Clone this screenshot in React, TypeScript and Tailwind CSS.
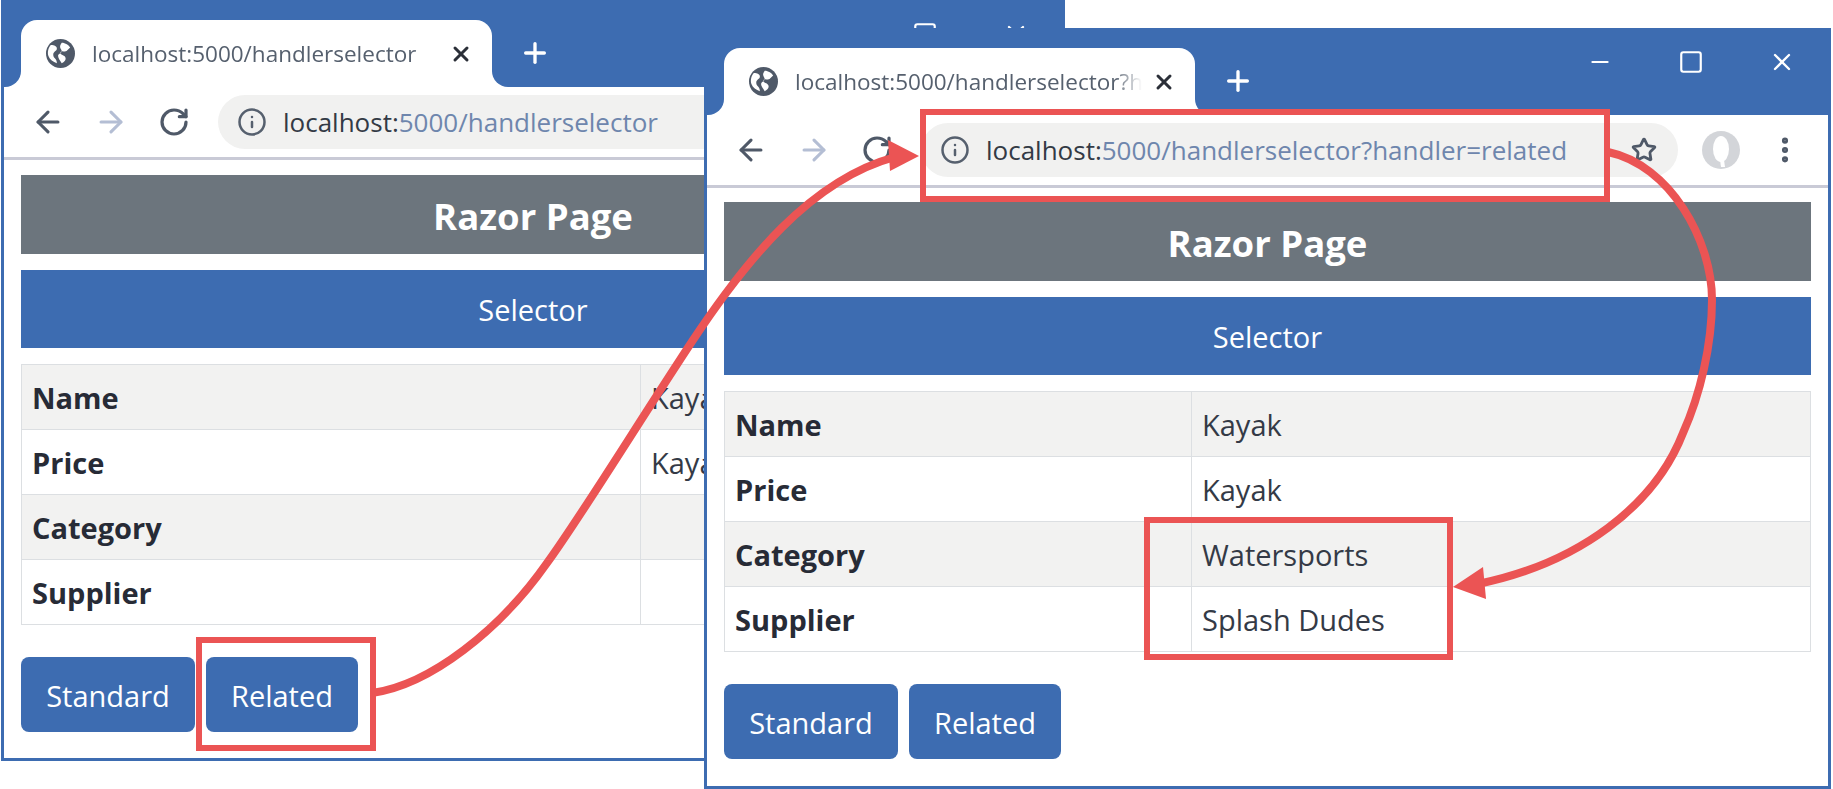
import { ArrowLeft, ArrowRight, Info, MoreVertical, Plus, RotateCw, Square, Star, X, Minus } from 'lucide-react'

type Row = { label: string; value: string }

type BrowserProps = {
  className: string
  pageTop: string
  tab: string
  url: string
  labelCol: string
  rows: Row[]
}

function Globe() {
  return (
    <svg viewBox="0 0 24 24" className="w-[29px] h-[29px] shrink-0">
      <circle cx="12" cy="12" r="12" fill="#4f5968" />
      <path d="M4 5c3 0 5 1 5 3s-3 2-3 5 3 3 3 7c-3-1-6-3-7-6-1-3 0-7 2-9z" fill="#fff" />
      <path d="M13 3c3 0 6 2 7 4l-3 3c-2 1-4-1-5 1s3 2 4 4-1 4-3 5c-1-2-3-4-3-6s3-2 3-4-3-3 0-7z" fill="#fff" />
    </svg>
  )
}

function Avatar() {
  return (
    <svg viewBox="0 0 40 40" className="w-[40px] h-[40px]">
      <circle cx="20" cy="20" r="19" fill="#d3d5d9" />
      <ellipse cx="20" cy="19" rx="8" ry="13" fill="#fff" />
      <path d="M19 30h4l1 7h-4z" fill="#fff" />
    </svg>
  )
}

function BrowserWindow({ className, pageTop, tab, url, labelCol, rows }: BrowserProps) {
  const host = url.slice(0, 10)
  const rest = url.slice(10)
  return (
    <div className={`absolute border-[3px] border-[#3d6cb1] bg-white overflow-hidden flex flex-col ${className}`}>
      {/* title bar */}
      <div className="h-[84px] shrink-0 bg-[#3d6cb1] flex items-end pl-[17px]">
        <div className="relative w-[471px] h-[67px] bg-white rounded-t-[16px] flex items-center pl-[25px] pr-[19px]">
          <span className="absolute -left-4 bottom-0 w-4 h-4 bg-white">
            <span className="block w-full h-full bg-[#3d6cb1] rounded-br-[16px]" />
          </span>
          <span className="absolute -right-4 bottom-0 w-4 h-4 bg-white">
            <span className="block w-full h-full bg-[#3d6cb1] rounded-bl-[16px]" />
          </span>
          <Globe />
          <span className="ml-[17px] flex-1 min-w-0 whitespace-nowrap text-[22.5px] text-[#56606e] [mask-image:linear-gradient(to_right,black_calc(100%_-_30px),transparent_calc(100%_-_2px))]">{tab}</span>
          <X className="w-6 h-6 ml-2 shrink-0 text-[#2b2f38]" strokeWidth={3} />
        </div>
        <Plus className="w-[32px] h-[32px] ml-[27px] mb-[18px] text-white" strokeWidth={2.5} />
        <div className="ml-auto self-start flex items-center h-[62px] text-white">
          <Minus className="w-[26px] h-[26px]" strokeWidth={2} />
          <Square className="w-[26px] h-[26px] ml-[65px]" strokeWidth={2} />
          <X className="w-[28px] h-[28px] ml-[64px] mr-[32px]" strokeWidth={2} />
        </div>
      </div>

      {/* toolbar */}
      <div className="h-[73px] shrink-0 border-b-[3px] border-[#c9cad6] flex items-center pl-3">
        <div className="w-[63px] flex justify-center">
          <ArrowLeft className="w-[34px] h-[34px] text-[#4f5968]" strokeWidth={2.2} />
        </div>
        <div className="w-[63px] flex justify-center">
          <ArrowRight className="w-[34px] h-[34px] text-[#b4bed4]" strokeWidth={2.2} />
        </div>
        <div className="w-[63px] flex justify-center">
          <RotateCw className="w-[32px] h-[32px] text-[#4f5968]" strokeWidth={2.4} />
        </div>
        <div className="ml-[13px] flex-1 min-w-0 h-[54px] rounded-full bg-[#f1f1f0] flex items-center pl-[19px] pr-[21px]">
          <Info className="w-[30px] h-[30px] shrink-0 text-[#56606e]" strokeWidth={2} />
          <span className="ml-[16px] flex-1 whitespace-nowrap text-[26px] text-[#6e86ad]">
            <span className="text-[#333a45]">{host}</span>
            {rest}
          </span>
          <Star className="w-[26px] h-[26px] shrink-0 text-[#4f5968]" strokeWidth={2.6} />
        </div>
        <div className="ml-[11px] w-[64px] flex justify-center">
          <Avatar />
        </div>
        <div className="w-[64px] mr-[11px] flex justify-center">
          <MoreVertical className="w-[32px] h-[32px] text-[#4f5968]" strokeWidth={2.6} />
        </div>
      </div>

      {/* page */}
      <div className={`px-[17px] flex flex-col ${pageTop}`}>
        <div className="h-[79px] pt-[3px] bg-[#6c757d] flex items-center justify-center text-white text-[36.5px] font-bold">Razor Page</div>
        <div className="mt-4 h-[78px] pt-[1px] bg-[#3d6cb1] flex items-center justify-center text-white text-[29px]">Selector</div>
        <table className="mt-4 w-full table-fixed border-collapse text-[29px] text-[#343a46]">
          <tbody>
            {rows.map((row, i) => (
              <tr key={row.label} className={`h-[65px] ${i % 2 === 0 ? 'bg-[#f2f2f1]' : 'bg-white'}`}>
                <td className={`${labelCol} border border-[#dcdfe2] pl-[10px] pt-[2px] font-bold text-[#272b36]`}>{row.label}</td>
                <td className="border border-[#dcdfe2] pl-[10px] pt-[2px]">{row.value}</td>
              </tr>
            ))}
          </tbody>
        </table>
        <div className="mt-8 flex gap-[11px]">
          <button className="w-[174px] h-[75px] pt-[2px] rounded-lg bg-[#3d6cb1] text-white text-[29px]">Standard</button>
          <button className="w-[152px] h-[75px] pt-[2px] rounded-lg bg-[#3d6cb1] text-white text-[29px]">Related</button>
        </div>
      </div>
    </div>
  )
}

export default function App() {
  return (
    <div className="relative w-[1833px] h-[789px] overflow-hidden bg-white font-['Open_Sans',sans-serif]">
      <BrowserWindow
        className="left-[1px] top-0 w-[1064px] h-[761px]"
        pageTop="pt-[15px]"
        tab="localhost:5000/handlerselector"
        url="localhost:5000/handlerselector"
        labelCol="w-[619px]"
        rows={[
          { label: 'Name', value: 'Kayak' },
          { label: 'Price', value: 'Kayak' },
          { label: 'Category', value: '' },
          { label: 'Supplier', value: '' },
        ]}
      />
      <BrowserWindow
        className="left-[704px] top-[28px] w-[1127px] h-[761px]"
        pageTop="pt-[14px]"
        tab="localhost:5000/handlerselector?h"
        url="localhost:5000/handlerselector?handler=related"
        labelCol="w-[467px]"
        rows={[
          { label: 'Name', value: 'Kayak' },
          { label: 'Price', value: 'Kayak' },
          { label: 'Category', value: 'Watersports' },
          { label: 'Supplier', value: 'Splash Dudes' },
        ]}
      />

      {/* callouts */}
      <div className="absolute left-[196px] top-[637px] w-[180px] h-[114px] border-[6px] border-[#eb5454]" />
      <div className="absolute left-[920px] top-[109px] w-[690px] h-[93px] border-[6px] border-[#eb5454]" />
      <div className="absolute left-[1144px] top-[517px] w-[309px] h-[143px] border-[6px] border-[#eb5454]" />
      <svg className="absolute left-0 top-0 pointer-events-none" width="1833" height="789" viewBox="0 0 1833 789" fill="none">
        <path
          d="M372 693C430 685 500 630 547 563C580 518 640 420 693 340C745 262 810 180 895 157"
          stroke="#eb5454"
          strokeWidth="8"
        />
        <polygon points="919,156 888,140 890,171" fill="#eb5454" />
        <path
          d="M1608 152C1670 165 1712 240 1712 300C1712 345 1700 395 1683 433C1655 505 1580 563 1478 584"
          stroke="#eb5454"
          strokeWidth="8"
        />
        <polygon points="1453,587 1483,567 1486,599" fill="#eb5454" />
      </svg>
    </div>
  )
}
